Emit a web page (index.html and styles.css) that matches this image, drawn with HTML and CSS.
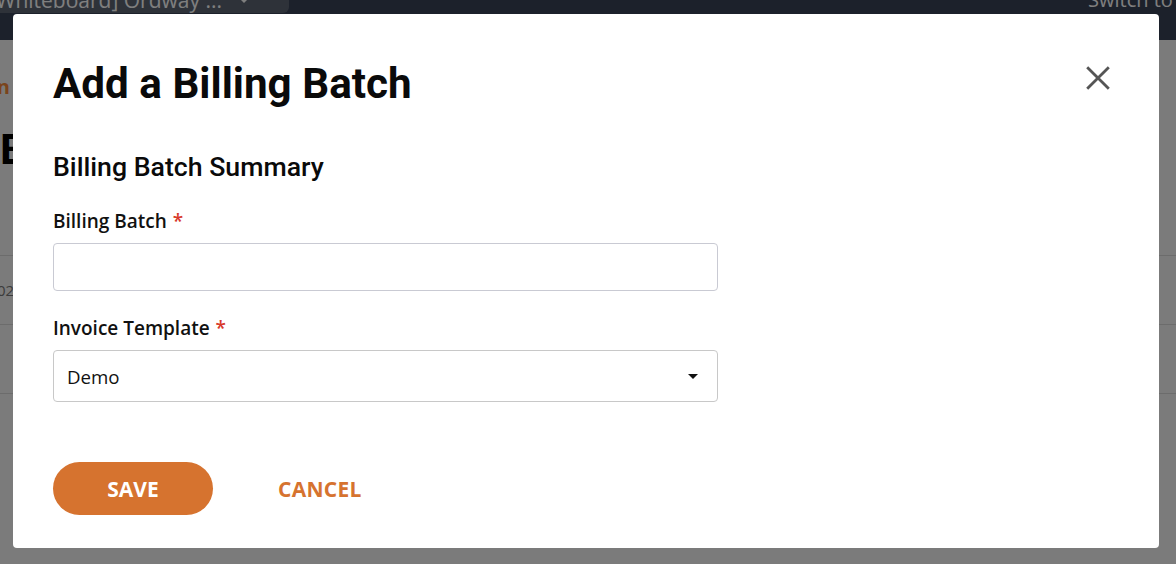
FILE: index.html
```html
<!DOCTYPE html>
<html lang="en">
<head>
<meta charset="utf-8">
<title>Add a Billing Batch</title>
<link rel="stylesheet" href="styles.css">
</head>
<body>
<div class="page">
  <header class="topbar">
    <div class="env-pill">
      <span class="env-name">[Whiteboard] Ordway ...</span>
      <svg class="env-chevron" width="12" height="8" viewBox="0 0 12 8"><path d="M0 0 L12 0 L6 6 Z" fill="#ffffff"/></svg>
    </div>
    <div class="switch"><span class="switch-text">Switch to Classic</span></div>
  </header>
  <main class="content">
    <div class="crumb"><span class="crumb-text">Admin</span></div>
    <h1 class="page-title">Billing Batches</h1>
    <div class="table">
      <div class="row row-head"><span class="cell">Date</span></div>
      <div class="row"><span class="cell cell-date">02/15/2024</span></div>
      <div class="row"><span class="cell cell-date"></span></div>
    </div>
  </main>
</div>

<div class="overlay">
  <div class="modal" role="dialog" aria-labelledby="modal-title">
    <div class="modal-head">
      <h2 class="modal-title" id="modal-title">Add a Billing Batch</h2>
      <button class="close-btn" aria-label="Close">
        <svg width="24" height="24" viewBox="0 0 24 24"><path d="M1.2 1.2 L22.8 22.8 M22.8 1.2 L1.2 22.8" stroke="#555555" stroke-width="2.8" fill="none"/></svg>
      </button>
    </div>
    <h3 class="section-title">Billing Batch Summary</h3>
    <div class="field field-first">
      <label class="field-label" for="batch">Billing Batch <span class="req">*</span></label>
      <input class="text-input" id="batch" type="text">
    </div>
    <div class="field">
      <label class="field-label">Invoice Template <span class="req">*</span></label>
      <div class="select">
        <span class="select-value">Demo</span>
        <svg class="select-caret" width="10" height="5" viewBox="0 0 10 5"><path d="M0 0 L10 0 L5 5 Z" fill="#111111"/></svg>
      </div>
    </div>
    <div class="actions">
      <button class="btn-save">SAVE</button>
      <button class="btn-cancel">CANCEL</button>
    </div>
  </div>
</div>
</body>
</html>
```

FILE: styles.css
```css
* { box-sizing: border-box; }

html, body {
  margin: 0;
  padding: 0;
  height: 100%;
  overflow: hidden;
}

body {
  background: #f6f6f6;
  font-family: "Open Sans", "Noto Sans", sans-serif;
}

.page {
  display: flex;
  flex-direction: column;
}

.topbar {
  height: 40px;
  background: #384256;
  display: flex;
  align-items: flex-start;
  justify-content: space-between;
}

.env-pill {
  width: 289px;
  height: 13px;
  background: #5c6472;
  border-bottom-right-radius: 6px;
  display: flex;
  align-items: flex-start;
  justify-content: flex-end;
  padding-right: 39px;
  gap: 16px;
  overflow: hidden;
}

.env-name {
  flex-shrink: 0;
  white-space: nowrap;
  font-size: 21px;
  line-height: 20px;
  margin-top: -10px;
  color: #ffffff;
}

.env-chevron {
  flex-shrink: 0;
  margin-top: -3px;
}

.switch {
  width: 88px;
  overflow: hidden;
  height: 13px;
}

.switch-text {
  display: block;
  white-space: nowrap;
  font-size: 20px;
  line-height: 20px;
  margin-top: -10px;
  color: #ffffff;
}

.content {
  display: flex;
  flex-direction: column;
}

.crumb {
  width: 10px;
  display: flex;
  justify-content: flex-end;
  margin-top: 35px;
}

.crumb-text {
  flex-shrink: 0;
  white-space: nowrap;
  font-weight: 700;
  font-size: 20px;
  line-height: 24px;
  color: #f5893a;
}

.page-title {
  margin: 25px 0 0;
  font-family: Roboto, sans-serif;
  font-weight: 700;
  font-size: 43px;
  line-height: 50px;
  color: #000000;
}

.table {
  margin-top: 13px;
}

.row {
  height: 69px;
  border-bottom: 1px solid #d8d8d8;
  display: flex;
  align-items: center;
}

.cell {
  font-size: 15px;
  color: #787878;
  white-space: nowrap;
}

.row-head .cell {
  visibility: hidden;
}

.cell-date {
  margin-left: -3px;
}

/* Modal */
.overlay {
  position: fixed;
  inset: 0;
  background: rgba(0, 0, 0, 0.5);
  display: flex;
  padding: 14px 17px 16px 13px;
}

.modal {
  flex: 1;
  background: #ffffff;
  border-radius: 4px;
  padding: 45px 49px 0 40px;
  display: flex;
  flex-direction: column;
}

.modal-head {
  display: flex;
  justify-content: space-between;
  align-items: flex-start;
}

.modal-title {
  margin: 0;
  font-family: Roboto, sans-serif;
  font-weight: 700;
  font-size: 42.2px;
  line-height: 50px;
  color: #0a0a0a;
}

.close-btn {
  margin-top: 7px;
  width: 24px;
  height: 24px;
  padding: 0;
  border: 0;
  background: none;
  display: flex;
}

.section-title {
  margin: 42px 0 0;
  font-family: Roboto, sans-serif;
  font-weight: 500;
  font-size: 26.7px;
  line-height: 32px;
  color: #0a0a0a;
}

.field {
  width: 665px;
  margin-top: 25px;
  display: flex;
  flex-direction: column;
}

.field-first {
  margin-top: 26px;
}

.field-label {
  font-weight: 600;
  font-size: 19px;
  line-height: 24px;
  color: #111111;
  margin-bottom: 10px;
}

.req {
  color: #d8392b;
  margin-left: 1px;
}

.text-input {
  height: 48px;
  border: 1px solid #c9cad3;
  border-radius: 4px;
  font-family: "Open Sans", sans-serif;
  font-size: 18.5px;
  padding: 0 13px;
  outline: none;
}

.select {
  height: 52px;
  border: 1px solid #c8c8c8;
  border-radius: 4px;
  padding: 0 19px 0 13px;
  display: flex;
  align-items: center;
  justify-content: space-between;
}

.select-value {
  font-size: 18.7px;
  color: #111111;
}

.actions {
  margin-top: 60px;
  display: flex;
  align-items: center;
}

.btn-save {
  width: 160px;
  height: 53px;
  border: 0;
  border-radius: 27px;
  background: #d6732f;
  color: #ffffff;
  font-family: "Open Sans", sans-serif;
  font-weight: 700;
  font-size: 21px;
  padding: 0;
}

.btn-cancel {
  margin-left: 65px;
  border: 0;
  background: none;
  padding: 0;
  color: #d6732f;
  font-family: "Open Sans", sans-serif;
  font-weight: 700;
  font-size: 21px;
  letter-spacing: 0.3px;
}
```
